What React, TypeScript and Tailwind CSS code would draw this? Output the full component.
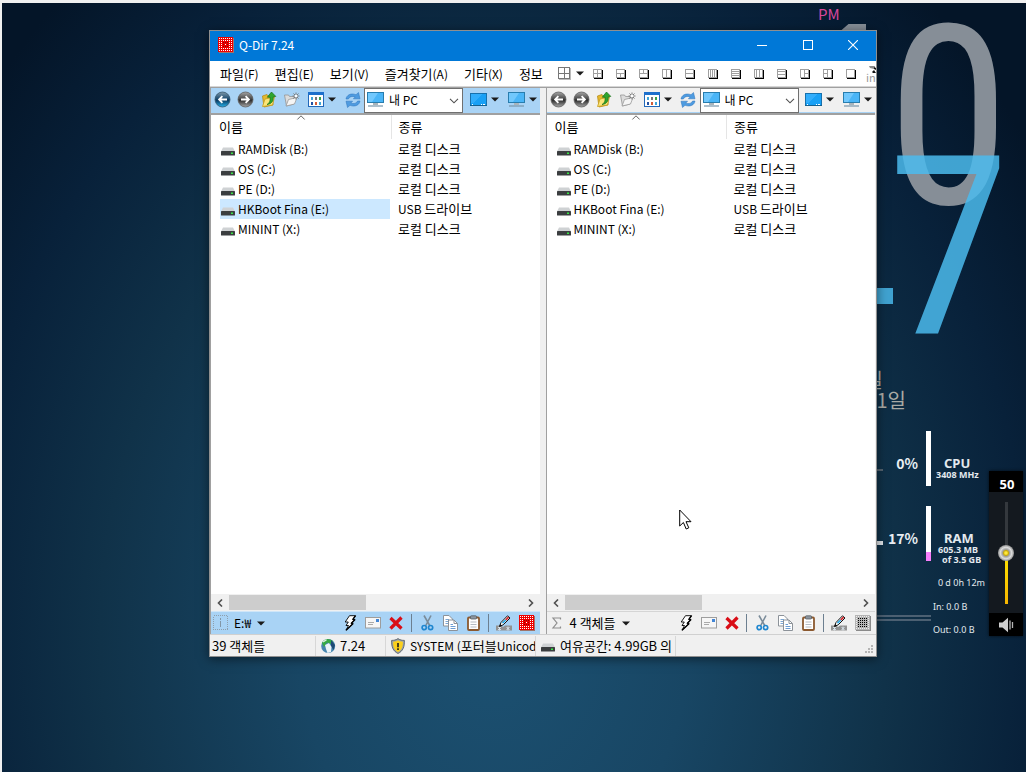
import type { ReactNode } from "react";

const LAYOUTS = [
  "M5.5 1.5V9.5M1.5 5.5H9.5",
  "M1.5 5.5H9.5M5.5 5.5V9.5",
  "M1.5 5.5H9.5M5.5 1.5V5.5",
  "M5.5 1.5V9.5",
  "M1.5 5.5H9.5",
  "M3.5 1.5V9.5M5.5 1.5V9.5M7.5 1.5V9.5",
  "M1.5 3.5H9.5M1.5 5.5H9.5M1.5 7.5H9.5",
  "M3.5 1.5V9.5M6.5 1.5V9.5",
  "M1.5 3.5H9.5M1.5 6.5H9.5",
  "M5.5 1.5V9.5M5.5 5.5H9.5",
  "M5.5 1.5V9.5M1.5 5.5H5.5",
  "",
];

function LayoutIcon({ d }: { d: string }) {
  return (
    <svg width="12" height="12" viewBox="0 0 12 12" shapeRendering="crispEdges">
      <path d="M2 10.5H11M10.5 2V11" stroke="#000" fill="none" />
      <rect x="1.5" y="1.5" width="8" height="8" fill="#fff" stroke="#a0a0a0" />
      <path d={d} stroke="#a0a0a0" fill="none" />
    </svg>
  );
}

function Caret() {
  return (
    <svg width="8" height="5" viewBox="0 0 8 5" className="shrink-0">
      <path d="M0 0.5H8L4 4.5Z" fill="#1a1a1a" />
    </svg>
  );
}

function NavIcon({ blue, forward }: { blue?: boolean; forward?: boolean }) {
  const id = `${blue ? "b" : "g"}${forward ? "f" : "r"}`;
  return (
    <svg width="17" height="17" viewBox="0 0 17 17">
      <defs>
        <linearGradient id={id} x1="0" y1="0" x2="0" y2="1">
          <stop offset="0" stopColor={blue ? "#7e97a8" : "#a5a5a5"} />
          <stop offset="0.45" stopColor={blue ? "#1d4d72" : "#4a4a4a"} />
          <stop offset="0.55" stopColor={blue ? "#0b3a60" : "#2d2d2d"} />
          <stop offset="1" stopColor={blue ? "#25b2ec" : "#a8a8a8"} />
        </linearGradient>
      </defs>
      <circle cx="8.5" cy="8.5" r="7.5" fill={`url(#${id})`} stroke={blue ? "#35556c" : "#606060"} strokeWidth="0.8" />
      <path
        d={forward ? "M4 8.5H11.5M8.6 5.2L11.9 8.5L8.6 11.8" : "M13 8.5H5.5M8.4 5.2L5.1 8.5L8.4 11.8"}
        stroke="#fff"
        strokeWidth="1.8"
        fill="none"
      />
    </svg>
  );
}

function FolderUp() {
  return (
    <svg width="16" height="17" viewBox="0 0 16 17">
      <path d="M1.5 5L6 3.5L7 5L12 3.8V14L3 16Z" fill="#e5b92e" stroke="#b98d18" strokeWidth="0.8" />
      <path d="M1.5 15.5L4 8L13.5 6L11.5 14Z" fill="#fbe578" stroke="#c79d22" strokeWidth="0.8" />
      <path d="M6 13.5C9 12 9.3 9 9 6.2H6.3L10.5 1L14.8 5.4L12.2 5.8C12.6 10 10.5 13 6 13.5Z" fill="#2fa52e" stroke="#157015" strokeWidth="0.7" />
    </svg>
  );
}

function FolderNew() {
  return (
    <svg width="17" height="15" viewBox="0 0 17 15">
      <path d="M1.5 3H5.5L6.5 4.5H11V12L3.5 14Z" fill="#dcdcdc" stroke="#949494" strokeWidth="0.8" />
      <path d="M3 14L5.5 7.5L14 5.5L11.5 12Z" fill="#f5f5f5" stroke="#999" strokeWidth="0.8" />
      <path d="M13 0.5V7.5M9.5 4H16.5M10.5 1.5L15.5 6.5M15.5 1.5L10.5 6.5" stroke="#7c7c7c" />
      <circle cx="13" cy="4" r="1.3" fill="#fff" />
    </svg>
  );
}

function ViewIcon() {
  return (
    <svg width="16" height="15" viewBox="0 0 16 15" shapeRendering="crispEdges">
      <rect x="0.5" y="0.5" width="15" height="14" fill="#fff" stroke="#2168ba" />
      <rect x="0" y="0" width="16" height="3" fill="#1d70cc" />
      <path d="M3 5h2v3H3zM11 10h2v3h-2z" fill="#3ca4d8" />
      <path d="M7 5h2v3H7z" fill="#767676" />
      <path d="M11 5h2v3h-2z" fill="#38a34c" />
      <path d="M3 10h2v3H3z" fill="#2352a3" />
      <path d="M7 10h2v3H7z" fill="#d45b37" />
    </svg>
  );
}

function RefreshIcon() {
  return (
    <svg width="16" height="16" viewBox="0 0 16 16">
      <path d="M1 7C1.5 3 6 .7 11 2.7L13.5 .5L15 6.8H8.4L10.2 5C7 3.8 4.5 4.6 3.4 7Z" fill="#4e9be0" stroke="#2c72bb" strokeWidth="0.5" />
      <path d="M15 9C14.5 13 10 15.3 5 13.3L2.5 15.5L1 9.2H7.6L5.8 11C9 12.2 11.5 11.4 12.6 9Z" fill="#4e9be0" stroke="#2c72bb" strokeWidth="0.5" />
    </svg>
  );
}

function MonitorIcon() {
  return (
    <svg width="17" height="16" viewBox="0 0 17 16">
      <rect x="0.5" y="0.5" width="16" height="10" fill="#4ab5f7" stroke="#287dae" />
      <path d="M1 1H11L5 10H1Z" fill="#82d0ff" opacity="0.7" />
      <path d="M6 11H11V13H6Z" fill="#a9b4bb" />
      <path d="M1 14H16" stroke="#7796aa" strokeWidth="1.2" />
    </svg>
  );
}

function DesktopIcon() {
  return (
    <svg width="17" height="14" viewBox="0 0 17 14" shapeRendering="crispEdges">
      <rect x="0.5" y="0.5" width="16" height="12" fill="#19a0f5" stroke="#1771ad" />
      <path d="M1 1H12L4 10H1Z" fill="#43b6ff" opacity="0.6" />
      <path d="M0 12.5H17" stroke="#15608f" />
      <path d="M2 11.5H3M11 11.5H12M13 11.5H15" stroke="#fff" />
    </svg>
  );
}

function DriveIcon() {
  return (
    <svg width="14" height="9" viewBox="0 0 14 9" className="shrink-0">
      <path d="M2 0.5H12L14 4.5H0Z" fill="#cfd2d4" />
      <rect x="0" y="4" width="14" height="4.5" rx="0.6" fill="#3b3e40" />
      <rect x="10" y="5.5" width="2" height="1.5" fill="#37e545" />
    </svg>
  );
}

function dots(from: number, to: number, ringOnly: boolean) {
  const out: string[] = [];
  for (let y = from; y <= to; y += 2) {
    for (let x = from; x <= to; x += 2) {
      if (!ringOnly || x === from || x === to || y === from || y === to) {
        out.push(`M${x} ${y}h1v1h-1z`);
      }
    }
  }
  return out.join("");
}

function QIcon({ gray }: { gray?: boolean }) {
  return (
    <svg width="16" height="16" viewBox="0 0 16 16">
      <path d="M1 15.5H16M15.5 1V16" stroke={gray ? "#8a8a8a" : "#a0756a"} />
      <rect width="15" height="15" fill={gray ? "#b4b4b4" : "#ee0000"} />
      <path d={dots(1, 13, true)} fill={gray ? "#ededed" : "#fff"} />
      <path d={dots(3, 11, true)} fill={gray ? "#000" : "#fff"} />
      <path d={dots(5, 9, true)} fill={gray ? "#000" : "#900000"} />
      <path d="M7 7h1v1h-1z" fill={gray ? "#000" : "#fff"} />
    </svg>
  );
}

function BoltIcon() {
  return (
    <svg width="14" height="16" viewBox="0 0 14 16">
      <path d="M6.5 .7H12.5L9.5 4.5H12L8 8.5H10.2L3 15.2L5.5 10.5H3L5.3 7H2.2Z" fill="#fff" stroke="#000" strokeWidth="0.9" />
      <path d="M12.5 .7L9.8 4.6M12 4.5L8.2 8.6M10.2 8.5L3 15.2" fill="none" stroke="#000" strokeWidth="1.4" />
    </svg>
  );
}

function MailIcon() {
  return (
    <svg width="16" height="12" viewBox="0 0 16 12">
      <rect x="0.5" y="0.5" width="15" height="10.5" fill="#f6f6f6" stroke="#9d9d9d" />
      <path d="M3 5.5H9M3 7.5H8" stroke="#aaa" />
      <rect x="11" y="2" width="3" height="3" fill="#4185d5" />
    </svg>
  );
}

function DeleteIcon() {
  return (
    <svg width="14" height="14" viewBox="0 0 14 14">
      <path d="M1.5 2L12.5 12.5M12.5 1.5L1.5 12.5" stroke="#d90d16" strokeWidth="3.2" />
    </svg>
  );
}

function CutIcon() {
  return (
    <svg width="13" height="16" viewBox="0 0 13 16">
      <path d="M3 .5L9 11M10 .5L4.5 11" stroke="#7a8b99" strokeWidth="1.6" />
      <circle cx="3.2" cy="12.6" r="2.1" fill="none" stroke="#1f86cf" strokeWidth="1.7" />
      <circle cx="9.6" cy="12.6" r="2.1" fill="none" stroke="#1f86cf" strokeWidth="1.7" />
    </svg>
  );
}

function CopyIcon() {
  return (
    <svg width="15" height="16" viewBox="0 0 15 16">
      <path d="M.5 .5H6L9.5 4V11H.5Z" fill="#fff" stroke="#8c9299" />
      <path d="M2.5 4.5H6M2.5 6.5H5M2.5 8.5H5" stroke="#7aa6d4" />
      <path d="M5.5 5H11L14.5 8.5V15.5H5.5Z" fill="#fff" stroke="#8c9299" />
      <path d="M11 5V8.5H14.5" fill="none" stroke="#8c9299" />
      <path d="M7.5 9.5H10M7.5 11.5H12.5M7.5 13.5H12.5" stroke="#6c9dd3" />
    </svg>
  );
}

function PasteIcon() {
  return (
    <svg width="13" height="16" viewBox="0 0 13 16">
      <rect x="1" y="2.5" width="11" height="12.5" rx="1" fill="#fff" stroke="#8b592f" strokeWidth="1.8" />
      <rect x="3.5" y="0.8" width="6" height="3.2" rx="0.8" fill="#8d969f" stroke="#565e66" strokeWidth="0.8" />
      <path d="M3.5 7H9.5M3.5 9.5H9.5M3.5 12H9.5" stroke="#b5bbc2" />
    </svg>
  );
}

function PenIcon() {
  return (
    <svg width="17" height="16" viewBox="0 0 17 16">
      <path d="M0 10.5H5L7 12L9 10.5H16V15.5H0Z" fill="#929292" />
      <path d="M2 12L5 15M5 12L2 15M3.5 11.5V15.5M10.5 12L13.5 15M13.5 12L10.5 15M12 11.5V15.5" stroke="#dce6ee" strokeWidth="0.9" />
      <path d="M3.5 11.5L5 7.5L11.5 .8L14 3L7.2 9.8Z" fill="#fff" stroke="#111" />
      <path d="M6.5 8.2L9.8 5" stroke="#29a9e6" strokeWidth="1.7" />
      <path d="M9.8 5L12.6 2.2" stroke="#d5232a" strokeWidth="1.7" />
      <path d="M3.2 11.8L4.2 9L6 10.8Z" fill="#111" />
    </svg>
  );
}

function GlobeIcon() {
  return (
    <svg width="15" height="16" viewBox="0 0 15 16">
      <circle cx="7.2" cy="8" r="7" fill="#4585ae" />
      <path d="M1 5C3 0 8 0 12 3L10 6L6 4.5L3 9Z" fill="#36a944" />
      <path d="M10 2L14 7L12.5 12L10 8Z" fill="#1d4a74" />
      <path d="M4 7L8 5L10.5 9L10 14L6.5 15L5 11Z" fill="#eaf4f8" />
      <path d="M2 4L5.5 1.6" stroke="#d9f1e0" strokeWidth="1.4" />
    </svg>
  );
}

function ShieldIcon() {
  return (
    <svg width="14" height="16" viewBox="0 0 14 16">
      <path d="M7 .6C9 2 11 2.4 13.4 2.4C13.6 9 12 13 7 15.5C2 13 .4 9 .6 2.4C3 2.4 5 2 7 .6Z" fill="#9aa3ab" stroke="#50585f" strokeWidth="0.8" />
      <path d="M7 2.3C8.6 3.3 10 3.6 11.9 3.7C12 8.8 10.8 12 7 14C3.2 12 2 8.8 2.1 3.7C4 3.6 5.4 3.3 7 2.3Z" fill="#fbd01c" />
      <path d="M7 5V9.2M7 10.2V12" stroke="#1c1c1c" strokeWidth="1.6" />
    </svg>
  );
}

function ToolButton({ label, wide, children }: { label: string; wide?: boolean; children: ReactNode }) {
  return (
    <button aria-label={label} className={`flex h-full shrink-0 items-center justify-center ${wide ? "w-[38px] gap-1" : "w-[23px]"}`}>
      {children}
    </button>
  );
}

const DRIVES = [
  ["RAMDisk (B:)", "", "로컬 디스크"],
  ["OS (C:)", "", "로컬 디스크"],
  ["PE (D:)", "", "로컬 디스크"],
  ["HKBoot Fina (E:)", "USB ", "드라이브"],
  ["MININT (X:)", "", "로컬 디스크"],
];

const MENUS = [
  ["파일", "(F)"],
  ["편집", "(E)"],
  ["보기", "(V)"],
  ["즐겨찾기", "(A)"],
  ["기타", "(X)"],
  ["정보", ""],
];

function Arrow({ right }: { right?: boolean }) {
  return (
    <svg width="6" height="8" viewBox="0 0 6 8">
      <path d={right ? "M1 .5L4.5 4L1 7.5" : "M5 .5L1.5 4L5 7.5"} fill="none" stroke="#505050" strokeWidth="1.6" />
    </svg>
  );
}

function Pane({ active }: { active?: boolean }) {
  const name = active ? "left" : "right";
  return (
    <section className="flex min-w-0 flex-1 flex-col border-l border-[#a0a0a0] bg-white">
      <div className={`flex h-[25px] shrink-0 items-start ${active ? "bg-[#a9d3f5]" : "border-b border-[#a9d3f5] bg-[#f0f0f0]"}`}>
        <div className="flex h-[23px] shrink-0">
          <ToolButton label="Back"><NavIcon blue={active} /></ToolButton>
          <ToolButton label="Forward"><NavIcon forward /></ToolButton>
          <ToolButton label="Up"><FolderUp /></ToolButton>
          <ToolButton label="New folder"><FolderNew /></ToolButton>
          <ToolButton label="View" wide><ViewIcon /><Caret /></ToolButton>
          <ToolButton label="Refresh"><RefreshIcon /></ToolButton>
        </div>
        <div className="relative h-[25px] w-[99px] shrink-0">
          <select
            aria-label={`Address, ${name} pane`}
            className="block h-[25px] w-full appearance-none border border-[#707070] bg-white pb-0.5 pl-6 text-[12px] leading-5 text-black"
          >
            <option>내 PC</option>
          </select>
          <span className="pointer-events-none absolute left-[3px] top-1"><MonitorIcon /></span>
          <svg width="10" height="6" viewBox="0 0 10 6" className="pointer-events-none absolute right-1 top-[10px]">
            <path d="M1 .8L5 4.8L9 .8" fill="none" stroke="#505050" strokeWidth="1.1" />
          </svg>
        </div>
        <div className="flex h-[23px] min-w-0 flex-1 pl-0.5">
          <ToolButton label="Desktop" wide><DesktopIcon /><Caret /></ToolButton>
          <ToolButton label="Computer" wide><MonitorIcon /><Caret /></ToolButton>
        </div>
      </div>
      <div className="min-h-0 flex-1 border-t-2 border-[#a0a0a0]">
        <table className="w-full table-fixed border-collapse text-left text-[13px] leading-5">
          <thead>
            <tr className="h-6">
              <th className="relative w-[180px] border-r border-[#e5e5e5] p-0 pl-2 font-normal">
                이름
                <svg width="9" height="5" viewBox="0 0 9 5" className="absolute left-1/2 top-0 -translate-x-1/2">
                  <path d="M.8 4.5L4.5 .8L8.2 4.5" fill="none" stroke="#666" />
                </svg>
              </th>
              <th className="p-0 pl-[7px] font-normal">종류</th>
            </tr>
          </thead>
          <tbody>
            {DRIVES.map(([drive, latin, kind], i) => (
              <tr key={drive} className="h-5">
                <td className="p-0 pl-[9px]">
                  <div className={`mr-px flex h-5 items-center gap-[3px] pl-px ${active && i === 3 ? "bg-[#cce8ff]" : ""}`}>
                    <span className="pt-1"><DriveIcon /></span>
                    <span className="whitespace-nowrap text-[12px]">{drive}</span>
                  </div>
                </td>
                <td className="whitespace-nowrap p-0 pl-[7px]">
                  {latin && <span className="text-[12px]">{latin}</span>}
                  {kind}
                </td>
              </tr>
            ))}
          </tbody>
        </table>
      </div>
      <div className="flex h-[17px] shrink-0 items-center bg-[#f0f0f0]">
        <button aria-label="Scroll left" className="flex h-full w-[18px] items-center justify-center"><Arrow /></button>
        <div className="h-[15px] flex-1"><div className="h-full w-[47%] bg-[#cdcdcd]" /></div>
        <button aria-label="Scroll right" className="flex h-full w-[18px] items-center justify-center"><Arrow right /></button>
      </div>
      <div className={`flex h-[23px] shrink-0 items-center border-t pl-0.5 pr-px text-[13px] leading-5 ${active ? "border-[#d0e6f8] bg-[#a9d3f5]" : "border-[#d5d5d5] bg-[#f0f0f0]"}`}>
        <button className="flex h-full items-center gap-[6px] whitespace-nowrap">
          {active ? (
            <svg width="15" height="16" viewBox="0 0 15 16" shapeRendering="crispEdges">
              <rect x="0.5" y="0.5" width="14" height="14" fill="none" stroke="#8f9fac" strokeDasharray="1 1" />
              <path d="M7.5 3V5M7.5 6V12" stroke="#8296a6" />
            </svg>
          ) : (
            <svg width="15" height="12" viewBox="0 0 15 12">
              <path d="M11.5 2.5V1H4L8 6L4 11H11.5V9.5" fill="none" stroke="#8d8d8d" strokeWidth="1.2" />
            </svg>
          )}
          <span className={active ? "text-[12px]" : ""}>{active ? "E:₩" : "4 객체들"}</span>
          <Caret />
        </button>
        <div className="ml-auto flex h-full items-center">
          <ToolButton label="Run"><BoltIcon /></ToolButton>
          <ToolButton label="Mail"><MailIcon /></ToolButton>
          <ToolButton label="Delete"><DeleteIcon /></ToolButton>
          <span className="ml-[3px] mr-1 h-[18px] w-px bg-[#6c7f90]" />
          <ToolButton label="Cut"><CutIcon /></ToolButton>
          <ToolButton label="Copy"><CopyIcon /></ToolButton>
          <ToolButton label="Paste"><PasteIcon /></ToolButton>
          <span className="ml-[3px] mr-1 h-[18px] w-px bg-[#6c7f90]" />
          <ToolButton label="Edit"><PenIcon /></ToolButton>
          <ToolButton label="Q-Dir"><QIcon gray={!active} /></ToolButton>
        </div>
      </div>
    </section>
  );
}

function ExplorerWindow() {
  return (
    <main className="absolute left-[209px] top-[30px] flex h-[627px] w-[668px] flex-col overflow-hidden border border-[#8f8f8f] bg-[#f0f0f0] text-black shadow-[0_2px_10px_rgba(0,0,0,0.5)]">
      <header className="flex h-[30px] shrink-0 items-center bg-[#0078d7] pb-0.5 pl-2 text-white">
        <QIcon />
        <h1 className="ml-[5px] text-[12px] leading-5">Q-Dir 7.24</h1>
        <div className="ml-auto flex h-full">
          <button aria-label="Minimize" className="flex w-[46px] items-center justify-center">
            <svg width="10" height="10"><path d="M0 5.5H10" stroke="#fff" /></svg>
          </button>
          <button aria-label="Maximize" className="flex w-[45px] items-center justify-center">
            <svg width="10" height="10"><rect x="0.5" y="0.5" width="9" height="9" fill="none" stroke="#fff" /></svg>
          </button>
          <button aria-label="Close" className="flex w-[46px] items-center justify-center">
            <svg width="10" height="10"><path d="M0 0L10 10M10 0L0 10" stroke="#fff" strokeWidth="1.1" /></svg>
          </button>
        </div>
      </header>
      <nav className="flex h-[26px] shrink-0 items-center border-b border-[#d5d5d5] bg-white pl-0.5 text-[13px] leading-5">
        {MENUS.map(([name, key]) => (
          <button key={name} className="shrink-0 whitespace-nowrap px-2">
            {name}
            {key && <span className="text-[12px]">{key}</span>}
          </button>
        ))}
        <div className="ml-auto flex h-full shrink-0 items-center">
          <button aria-label="Layout" className="mr-0.5 flex h-full w-[26px] items-center gap-1">
            <svg width="14" height="14" viewBox="0 0 14 14" shapeRendering="crispEdges">
              <path d="M1 12.5H13M12.5 1V13" stroke="#bbb" />
              <path d="M.5 .5H11.5V11.5H.5ZM6.5 .5V11.5M.5 6.5H11.5" fill="#fff" stroke="#777" />
            </svg>
            <Caret />
          </button>
          {LAYOUTS.map((d, i) => (
            <ToolButton key={d} label={`Layout ${i + 1}`}><LayoutIcon d={d} /></ToolButton>
          ))}
          <div className="relative h-full w-3.5 overflow-hidden pl-1 pt-2 text-[11px] leading-4 text-[#999]">
            ine
            <svg width="9" height="9" viewBox="0 0 9 9" className="absolute right-0 top-1">
              <path d="M2 1H8L7 4L3 3Z" fill="#888" />
              <path d="M7 2L9 3V5L7 4ZM5 7L7 5L9 8H6Z" fill="#111" />
            </svg>
          </div>
        </div>
      </nav>
      <div className="flex min-h-0 flex-1 gap-1.5 border-t border-[#a0a0a0] pr-px">
        <Pane active />
        <Pane />
      </div>
      <footer className="flex h-[22px] shrink-0 items-center border-t border-[#d0d0d0] text-[13px] leading-5">
        <span className="h-5 w-[106px] shrink-0 whitespace-nowrap border-r border-[#d7d7d7] pl-0.5">39 객체들</span>
        <span className="flex h-5 w-[70px] shrink-0 items-center gap-1 border-r border-[#d7d7d7] pl-[5px]"><GlobeIcon />7.24</span>
        <span className="flex h-5 w-[150px] shrink-0 items-center gap-[5px] overflow-hidden whitespace-nowrap border-r border-[#d7d7d7] pl-[5px]">
          <span className="shrink-0"><ShieldIcon /></span>
          <span className="text-[12px]">SYSTEM (<span className="text-[13px]">포터블</span>Unicod</span>
        </span>
        <span className="flex h-5 w-[140px] shrink-0 items-center gap-[5px] overflow-hidden whitespace-nowrap border-r border-[#d7d7d7] pl-[5px]">
          <span className="pt-1"><DriveIcon /></span>여유공간: 4.99GB 의
        </span>
        <svg width="9" height="9" viewBox="0 0 9 9" className="mb-0.5 ml-auto mr-0.5 self-end" shapeRendering="crispEdges">
          <path d="M6 0h2v2H6zM3 3h2v2H3zM6 3h2v2H6zM0 6h2v2H0zM3 6h2v2H3zM6 6h2v2H6z" fill="#b5b5b5" />
        </svg>
      </footer>
    </main>
  );
}

function Meter({ value, fill }: { value: string; fill?: boolean }) {
  return (
    <div className="flex h-[55px] w-[54px] items-center justify-end gap-2 text-[14px] font-bold leading-5 text-[#e8edf2]">
      <span className="pt-2">{value}</span>
      <span className="flex h-full w-[5px] flex-col justify-end bg-white">
        {fill && <span className="h-[17%] bg-[#f87efb]" />}
      </span>
    </div>
  );
}

function Gadgets() {
  return (
    <aside className="text-[#e3e9ee]">
      <div className="absolute left-[818px] top-1 text-[15px] leading-5 text-[#d8479c]">PM</div>
      <div className="absolute left-[841px] top-6 h-4 w-[25px] bg-[#868e97] [clip-path:polygon(30%_0,100%_0,100%_100%,0_100%,0_40%)]" />
      <div className="absolute left-[877px] top-[29px] w-[143px] text-center font-['Roboto_Condensed','Roboto',sans-serif] text-[250px] font-[370] leading-[180px] text-[#868e97]">0</div>
      <div className="absolute left-[877px] top-[159px] w-[143px] text-center font-['Roboto_Condensed','Roboto',sans-serif] text-[250px] font-[370] leading-[180px] text-[#4bbbed]/85">7</div>
      <div className="absolute left-[877px] top-[288px] h-4 w-4 bg-[#40a2d0]" />
      <div className="absolute right-[143px] top-[368px] text-[20px] leading-6 text-[#a9aaa5]">일</div>
      <div className="absolute right-[120px] top-[388px] text-[20px] leading-6 text-[#a9aaa5]">1일</div>
      <div className="absolute left-[877px] top-[431px]"><Meter value="0%" /></div>
      <div className="absolute left-[877px] top-[506px]"><Meter value="17%" fill /></div>
      <div className="absolute left-[877px] top-[469px] h-0.5 w-1.5 bg-[#53626f]" />
      <div className="absolute left-[877px] top-[541px] h-1 w-1.5 bg-[#dfe4e8]" />
      <div className="absolute left-[936px] top-[456px] w-12 font-['Noto_Sans',sans-serif] font-bold">
        <div className="pl-2 text-[13px] leading-[14px]">CPU</div>
        <div className="whitespace-nowrap text-[9px] leading-[10px]">3408 MHz</div>
      </div>
      <div className="absolute left-[936px] top-[531px] w-12 font-['Noto_Sans',sans-serif] font-bold">
        <div className="pl-2 text-[13px] leading-[14px]">RAM</div>
        <div className="whitespace-nowrap pl-0.5 text-[9px] leading-[10px]">605.3 MB</div>
        <div className="whitespace-nowrap pl-1.5 text-[9px] leading-[10px]">of 3.5 GB</div>
      </div>
      <div className="absolute right-[41px] top-[577px] whitespace-nowrap font-['Noto_Sans',sans-serif] text-[9px] leading-3">0 d 0h 12m</div>
      <div className="absolute left-[933px] top-[601px] whitespace-nowrap font-['Noto_Sans',sans-serif] text-[9px] leading-3">In: 0.0 B</div>
      <div className="absolute left-[933px] top-[624px] whitespace-nowrap font-['Noto_Sans',sans-serif] text-[9px] leading-3">Out: 0.0 B</div>
      <div className="absolute left-[877px] top-[615px] h-1.5 w-[54px] border-y-2 border-[#4c6072]" />
    </aside>
  );
}

function Volume() {
  return (
    <div className="absolute left-[989px] top-[471px] flex w-[34px] flex-col bg-[#14191f] shadow-[0_0_3px_rgba(0,0,0,0.7)]">
      <label htmlFor="volume" className="h-[21px] bg-black pl-0.5 pt-[3px] text-center font-['Noto_Sans',sans-serif] text-[13px] font-bold leading-5 text-white">50</label>
      <div className="flex h-[121px] justify-center pt-2.5">
        <input
          id="volume"
          type="range"
          defaultValue={50}
          className="h-[102px] w-4 appearance-none bg-[linear-gradient(to_bottom,#34383d_50%,#ffe400_50%,#f7b500)] bg-[length:3px_100%] bg-center bg-no-repeat [direction:rtl] [writing-mode:vertical-lr] [&::-webkit-slider-thumb]:h-4 [&::-webkit-slider-thumb]:w-4 [&::-webkit-slider-thumb]:appearance-none [&::-webkit-slider-thumb]:rounded-full [&::-webkit-slider-thumb]:bg-[radial-gradient(circle,#ffe93b_10%,#c9a90c_22%,#a0a0a0_32%,#dcdcdc_50%,#8d8d8d_72%)]"
        />
      </div>
      <button aria-label="Mute" className="flex h-[23px] items-center justify-center bg-black">
        <svg width="17" height="16" viewBox="0 0 17 16">
          <path d="M1 5.5H4.5L10 .8V15.2L4.5 10.5H1Z" fill="#cfcfcf" />
          <path d="M12 3.5V12.5M14.5 5V11" stroke="#b5b5b5" strokeWidth="1.3" />
        </svg>
      </button>
    </div>
  );
}

export default function App() {
  return (
    <div className="relative min-h-screen overflow-hidden border-l-2 border-t-[3px] border-[#f0f0f0] bg-[radial-gradient(ellipse_64%_110%_at_48%_82%,#1c5172_0%,#184664_30%,#103249_60%,#08213a_82%,#041528_100%)] font-['Noto_Sans_CJK_KR',sans-serif]">
      <div className="absolute -left-0.5 -top-[3px] h-[772px] w-[1026px]">
        <Gadgets />
        <Volume />
        <ExplorerWindow />
        <svg width="13" height="21" viewBox="0 0 13 21" className="absolute left-[679px] top-[509px]">
          <path d="M.7 1V17L4.4 13.5L7.2 20L9.8 18.8L7 12.7H12Z" fill="#fff" stroke="#000" />
        </svg>
      </div>
    </div>
  );
}
